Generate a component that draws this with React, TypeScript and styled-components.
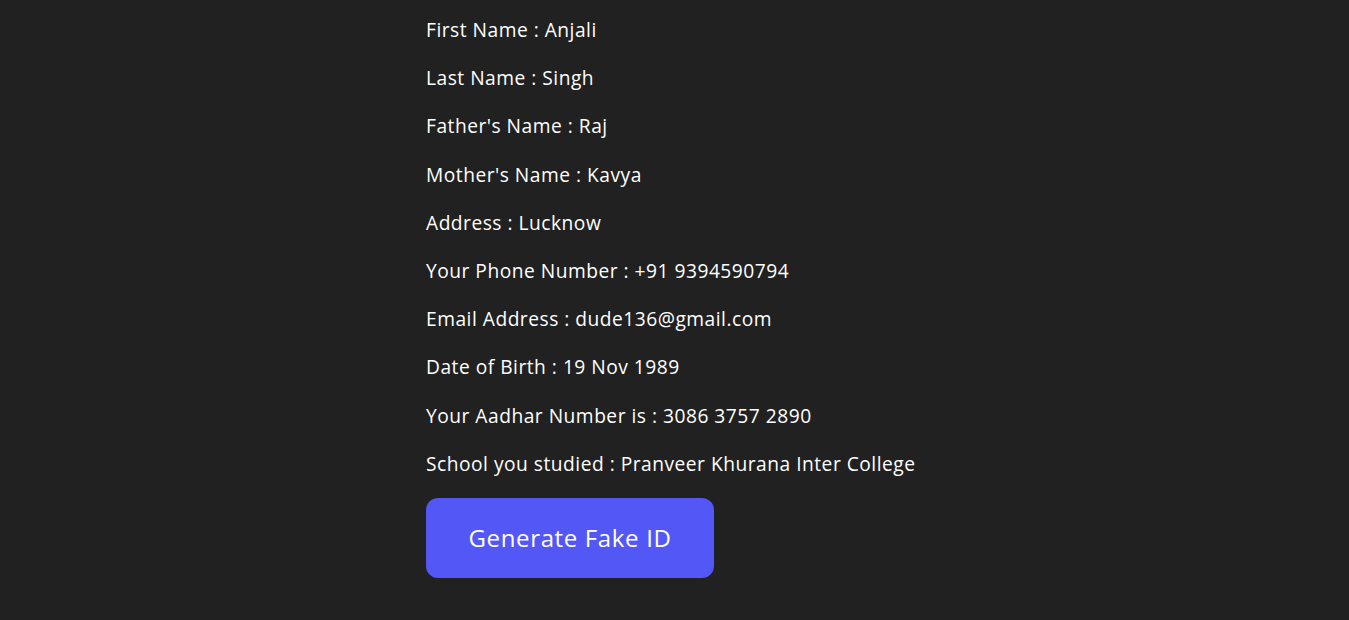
import React from "react";
import styled, { createGlobalStyle } from "styled-components";

const GlobalStyle = createGlobalStyle`
  html, body {
    margin: 0;
    padding: 0;
    background: #212121;
  }
  body {
    font-family: "Open Sans", "Noto Sans", sans-serif;
    color: #ffffff;
  }
`;

const Page = styled.main`
  min-height: 620px;
  background: #212121;
`;

const Column = styled.section`
  width: 497px;
  margin: 0 auto;
  padding-top: 16px;
  display: flex;
  flex-direction: column;
  align-items: flex-start;
  gap: 19.42px;
`;

const Field = styled.p`
  margin: 0;
  font-size: 19.2px;
  line-height: 28.8px;
  font-weight: 400;
  letter-spacing: 0.5px;
  color: #ffffff;
  white-space: nowrap;
`;

const GenerateButton = styled.button`
  width: 288px;
  height: 80px;
  margin-top: -0.4px;
  border: none;
  border-radius: 12px;
  background: #5357f5;
  color: #ffffff;
  font-family: "Open Sans", "Noto Sans", sans-serif;
  font-size: 24px;
  font-weight: 400;
  letter-spacing: 0.65px;
  cursor: pointer;
  display: flex;
  align-items: center;
  justify-content: center;
`;

const fields: [string, string][] = [
  ["First Name", "Anjali"],
  ["Last Name", "Singh"],
  ["Father's Name", "Raj"],
  ["Mother's Name", "Kavya"],
  ["Address", "Lucknow"],
  ["Your Phone Number", "+91 9394590794"],
  ["Email Address", "dude136@gmail.com"],
  ["Date of Birth", "19 Nov 1989"],
  ["Your Aadhar Number is", "3086 3757 2890"],
  ["School you studied", "Pranveer Khurana Inter College"],
];

export default function App() {
  return (
    <>
      <GlobalStyle />
      <Page>
        <Column>
          {fields.map(([label, value]) => (
            <Field key={label}>
              {label} : {value}
            </Field>
          ))}
          <GenerateButton>Generate Fake ID</GenerateButton>
        </Column>
      </Page>
    </>
  );
}
